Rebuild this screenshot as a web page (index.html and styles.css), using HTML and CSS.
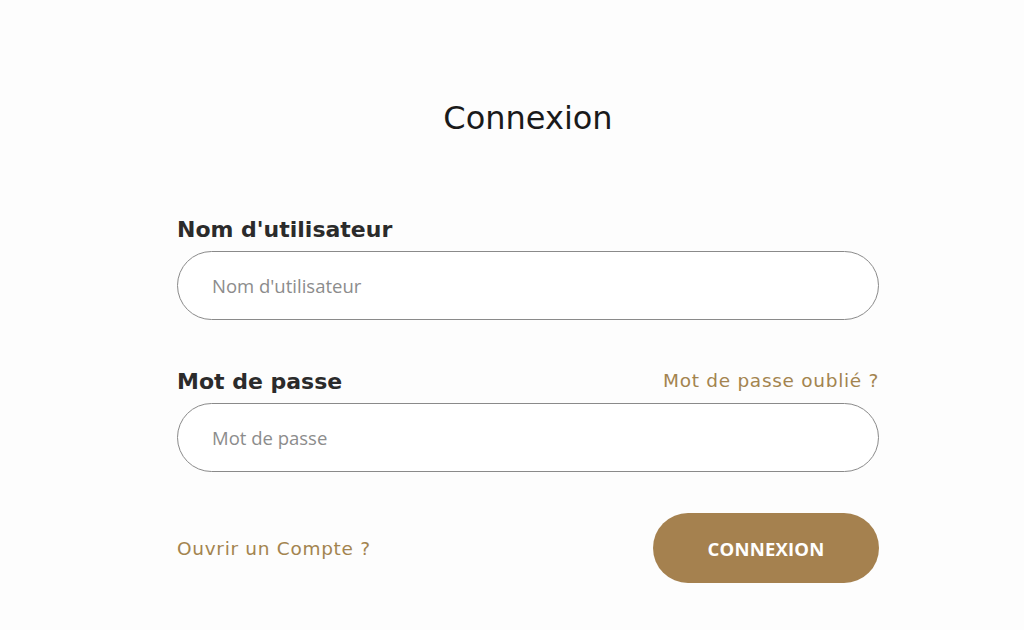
FILE: index.html
```html
<!DOCTYPE html>
<html lang="fr">
<head>
<meta charset="utf-8">
<title>Connexion</title>
<link rel="stylesheet" href="styles.css">
</head>
<body>
<main class="page">
  <h1 class="title">Connexion</h1>
  <form class="form">
    <div class="field">
      <div class="field-head">
        <label class="label" for="user">Nom d'utilisateur</label>
      </div>
      <input class="input" id="user" type="text" placeholder="Nom d'utilisateur">
    </div>
    <div class="field">
      <div class="field-head">
        <label class="label" for="pass">Mot de passe</label>
        <a class="link" href="#">Mot de passe oublié ?</a>
      </div>
      <input class="input" id="pass" type="password" placeholder="Mot de passe">
    </div>
    <div class="actions">
      <a class="link" href="#">Ouvrir un Compte ?</a>
      <button class="btn" type="button">CONNEXION</button>
    </div>
  </form>
</main>
</body>
</html>
```

FILE: styles.css
```css
* { box-sizing: border-box; }
html, body { margin: 0; padding: 0; background: #fdfdfd; }
body {
  font-family: "DejaVu Sans", sans-serif;
  color: #222;
  padding-left: 32px;
}

.page {
  width: 702px;
  margin: 0 auto;
  padding-top: 96px;
}

.title {
  margin: 0;
  text-align: center;
  font-size: 32px;
  font-weight: 400;
  line-height: 44px;
  color: #1a1a1a;
}

.form { margin-top: 77px; display: flex; flex-direction: column; }

.field { display: flex; flex-direction: column; }
.field + .field { margin-top: 49px; }

.field-head {
  display: flex;
  justify-content: space-between;
  align-items: flex-end;
  height: 34px;
  padding-bottom: 8px;
}

.label {
  font-size: 22px;
  line-height: 26px;
  font-weight: 700;
  color: #2b2b2b;
}

.field-head .link { line-height: 22px; margin-bottom: 3px; }

.link {
  font-family: "DejaVu Sans", sans-serif;
  font-size: 18.5px;
  letter-spacing: 0.7px;
  color: #a3844f;
  text-decoration: none;
}

.input {
  height: 69px;
  border: 1px solid #8a8a8a;
  border-radius: 35px;
  background: #fff;
  padding: 0 34px;
  font-family: "Open Sans", sans-serif;
  font-size: 18.5px;
  color: #333;
  outline: none;
}
.input::placeholder { color: #8c8c8c; }

.actions {
  display: flex;
  justify-content: space-between;
  align-items: center;
  margin-top: 41px;
}

.btn {
  width: 226px;
  height: 70px;
  border: none;
  border-radius: 35px;
  background: #a5814f;
  color: #fff;
  font-family: "Open Sans", sans-serif;
  font-weight: 700;
  font-size: 18.5px;
  letter-spacing: 0.2px;
}
```
